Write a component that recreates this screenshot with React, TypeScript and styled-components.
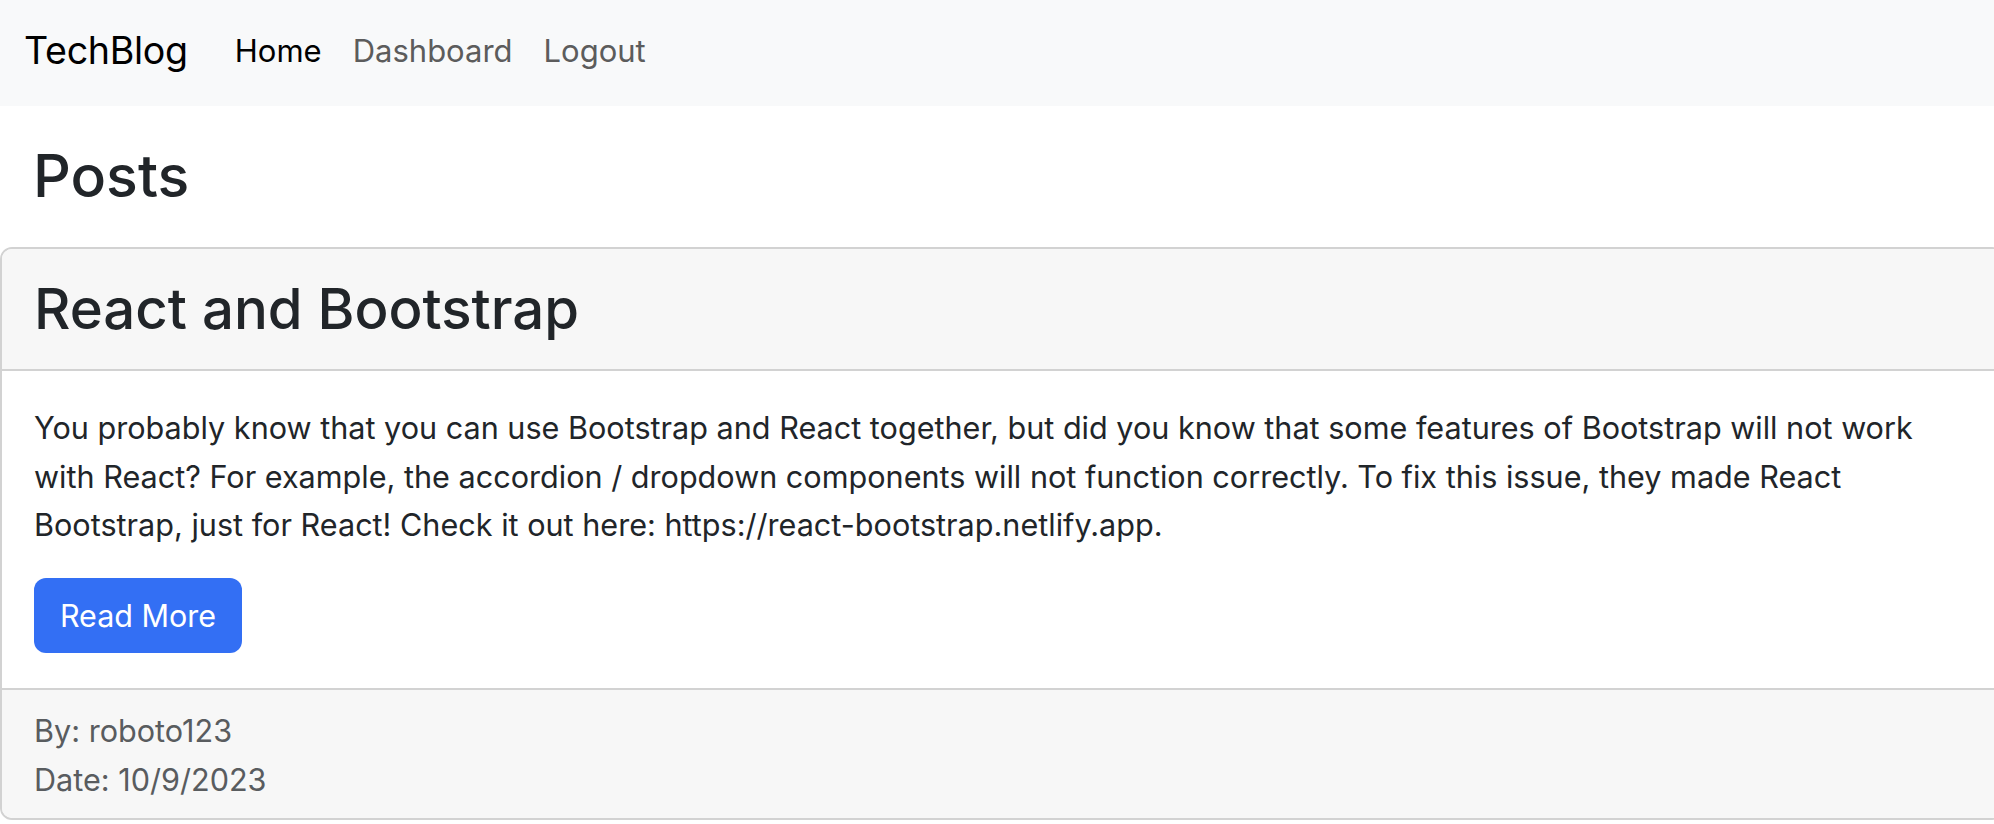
import React from "react";
import styled, { createGlobalStyle } from "styled-components";

const Global = createGlobalStyle`
  html, body { margin: 0; padding: 0; background: #fff; overflow-x: hidden; }
  body { font-family: Inter, "Liberation Sans", sans-serif; color: #212529; }
  * { box-sizing: border-box; }
`;

const NavBar = styled.nav`
  height: 106px;
  background: #f8f9fa;
  display: flex;
  align-items: center;
  padding: 0 0 5px 24px;
`;

const Brand = styled.a`
  font-size: 37.6px;
  color: #000;
  text-decoration: none;
  margin-right: 47px;
  letter-spacing: -0.3px;
`;

const NavList = styled.div`
  display: flex;
  gap: 31px;
`;

const NavLink = styled.a<{ $active?: boolean }>`
  font-size: 31px;
  color: ${(p) => (p.$active ? "#000" : "#5c5c5c")};
  text-decoration: none;
`;

const PageTitle = styled.h1`
  margin: 0;
  padding: 0 0 0 33px;
  font-size: 59px;
  font-weight: 500;
  line-height: 1.2;
  height: 141px;
  display: flex;
  align-items: center;
`;

const Card = styled.section`
  width: calc(100% + 10px);
  border: 2px solid #d2d2d2;
  border-radius: 12px;
  overflow: hidden;
`;

const CardHeader = styled.header`
  background: #f7f7f7;
  border-bottom: 2px solid #d2d2d2;
  height: 122px;
  display: flex;
  align-items: center;
  padding-left: 32px;
`;

const PostTitle = styled.h2`
  margin: 0;
  font-size: 56.3px;
  font-weight: 500;
  line-height: 1.2;
`;

const CardBody = styled.div`
  padding: 33px 32px 35px 32px;
`;

const BodyText = styled.p`
  margin: 0 0 28px;
  font-size: 30.6px;
  line-height: 48.5px;
`;

const Button = styled.button`
  font-family: inherit;
  font-size: 30.5px;
  color: #fff;
  background: #336ff4;
  border: none;
  border-radius: 12px;
  width: 208px;
  height: 75px;
  padding: 0;
  cursor: pointer;
`;

const CardFooter = styled.footer`
  background: #f7f7f7;
  border-top: 2px solid #d2d2d2;
  padding: 16px 32px 14px;
`;

const Meta = styled.div`
  font-size: 30.6px;
  line-height: 49px;
  color: #595c5f;
`;

export default function App() {
  return (
    <>
      <Global />
      <NavBar>
        <Brand href="#">TechBlog</Brand>
        <NavList>
          <NavLink $active href="#">Home</NavLink>
          <NavLink href="#">Dashboard</NavLink>
          <NavLink href="#">Logout</NavLink>
        </NavList>
      </NavBar>
      <PageTitle>Posts</PageTitle>
      <Card>
        <CardHeader>
          <PostTitle>React and Bootstrap</PostTitle>
        </CardHeader>
        <CardBody>
          <BodyText>
            You probably know that you can use Bootstrap and React together, but did you know that some features of
            Bootstrap will not work with React? For example, the accordion / dropdown components will not function
            correctly. To fix this issue, they made React Bootstrap, just for React! Check it out here:
            https://react-bootstrap.netlify.app.
          </BodyText>
          <Button>Read More</Button>
        </CardBody>
        <CardFooter>
          <Meta>By: roboto123</Meta>
          <Meta>Date: 10/9/2023</Meta>
        </CardFooter>
      </Card>
    </>
  );
}
